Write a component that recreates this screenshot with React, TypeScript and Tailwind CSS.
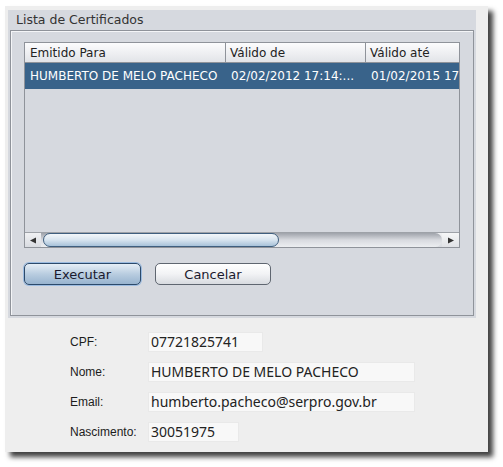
import React from "react";

const swing = "font-['DejaVu_Sans',sans-serif]";
const arial = "font-['Liberation_Sans',Arial,sans-serif]";

const Field = ({ label, value, w }: { label: string; value: string; w: string }) => (
  <div className="flex items-center h-[20px]">
    <span className={`${arial} w-[78px] text-[12px] text-[#1c1c1c]`}>{label}</span>
    <div className={`${w} h-[20px] bg-[#f8f8f8] border border-[#e9e9e9] flex items-center pl-[2px] text-[14px] text-[#222] leading-none`}>
      {value}
    </div>
  </div>
);

export default function App() {
  return (
    <div className="min-h-screen bg-white pl-[5px] pt-[6px]">
      <div className="w-[483px] h-[446px] bg-[#eeeeee] shadow-[5px_5px_5px_rgba(0,0,0,0.75)] pt-[4px] pl-[3px]">
        {/* titled panel */}
        <div className={`${swing} w-[468px] h-[308px] bg-[#d6d9df] pt-[1px] pl-[2px]`}>
          <div className="h-[19px] pl-[6px] text-[12.5px] text-[#333] leading-[18px]">Lista de Certificados</div>
          <div className="w-[464px] h-[286px] border border-[#8f939a] shadow-[inset_1px_1px_0_#f4f5f7] pt-[11px] pl-[13px]">
            {/* table */}
            <div className="w-[436px] h-[206px] border border-[#8f939a] flex flex-col">
              <div className="flex h-[20px] bg-gradient-to-b from-[#fcfcfd] to-[#e2e4e8] border-b border-[#8f939a] text-[12px] text-[#222] leading-[20px]">
                <div className="w-[201px] pl-[5px] border-r border-[#8f939a] shrink-0">Emitido Para</div>
                <div className="w-[140px] pl-[4px] border-r border-[#8f939a] shrink-0">Válido de</div>
                <div className="flex-1 pl-[4px] overflow-hidden whitespace-nowrap">Válido até</div>
              </div>
              <div className="flex h-[26px] bg-[#39638a] text-white text-[12px] leading-[26px] whitespace-nowrap overflow-hidden">
                <div className="w-[201px] pl-[5px] shrink-0">HUMBERTO DE MELO PACHECO</div>
                <div className="w-[140px] pl-[5px] shrink-0">02/02/2012 17:14:...</div>
                <div className="flex-1 pl-[5px] overflow-hidden">01/02/2015 17</div>
              </div>
              <div className="flex-1" />
              {/* horizontal scrollbar */}
              <div className="flex h-[15px] border-t border-[#9ea2a8] bg-gradient-to-b from-[#f0f1f3] to-[#d9dce1]">
                <div className="w-[16px] flex items-center justify-center shrink-0">
                  <svg width="8" height="7" viewBox="0 0 8 7"><path d="M1 3.5 L7 0.5 L7 6.5 Z" fill="#333" /></svg>
                </div>
                <div className="flex-1 flex bg-gradient-to-b from-[#9fa3aa] via-[#d8dadf] to-[#eceef1] rounded-r-[10px]">
                  <div className="w-[236px] ml-[2px] h-full rounded-[10px] border border-[#3f5f7f] bg-gradient-to-b from-[#f3f7fa] via-[#d7e4ef] to-[#a8c2d9]" />
                </div>
                <div className="w-[17px] flex items-center justify-center shrink-0 bg-gradient-to-b from-[#f6f7f8] to-[#dfe1e5]">
                  <svg width="8" height="7" viewBox="0 0 8 7"><path d="M7 3.5 L1 0.5 L1 6.5 Z" fill="#333" /></svg>
                </div>
              </div>
            </div>
            {/* buttons */}
            <div className="flex gap-[14px] mt-[15px]">
              <button className="w-[117px] h-[22px] rounded-[5px] border border-[#2c4a6b] bg-gradient-to-b from-[#e6eef6] via-[#b9cde0] to-[#98b4cf] shadow-[0_0_0_1px_#9bbbe0] text-[13px] text-[#1a1a2e] leading-none">
                Executar
              </button>
              <button className="w-[116px] h-[22px] rounded-[5px] border border-[#5f6670] bg-gradient-to-b from-[#ffffff] via-[#f2f3f5] to-[#d8dbe0] text-[13px] text-[#1a1a2e] leading-none">
                Cancelar
              </button>
            </div>
          </div>
        </div>
        {/* form */}
        <div className="flex flex-col gap-[10px] mt-[14px] pl-[62px]">
          <Field label="CPF:" value="07721825741" w="w-[115px]" />
          <Field label="Nome:" value="HUMBERTO DE MELO PACHECO" w="w-[267px]" />
          <Field label="Email:" value="humberto.pacheco@serpro.gov.br" w="w-[267px]" />
          <Field label="Nascimento:" value="30051975" w="w-[91px]" />
        </div>
      </div>
    </div>
  );
}
